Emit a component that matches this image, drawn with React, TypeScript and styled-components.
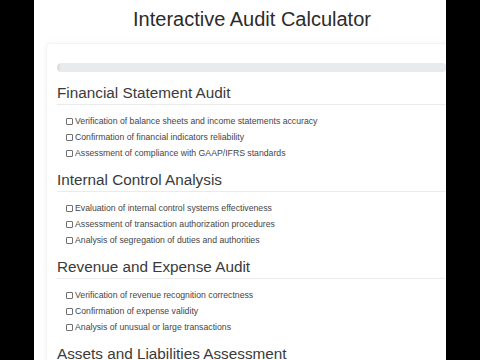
import React, { useState } from 'react'
import styled, { createGlobalStyle } from 'styled-components'

const GlobalStyle = createGlobalStyle`
    html, body {
        margin: 0;
        padding: 0;
        background: #000;
    }
    body {
        width: 480px;
        height: 360px;
        overflow: hidden;
        font-family: 'Liberation Sans', Arial, sans-serif;
    }
`

const Frame = styled.div`
    width: 412px;
    height: 360px;
    margin-left: 34px;
    background: #fff;
    overflow: hidden;
`

const Page = styled.div`
    width: 436px;
`

const Title = styled.h1`
    margin: 7px 0 12px;
    font-size: 20px;
    line-height: 24px;
    font-weight: 400;
    color: #2b2b2b;
    text-align: center;
`

const Card = styled.div`
    margin: 0 12px;
    padding: 20px 10px 12px;
    background: #fff;
    border: 1px solid #f3f3f3;
    border-radius: 4px;
    box-shadow: 0 0 6px rgba(0, 0, 0, 0.05);
`

const Progress = styled.div`
    height: 9px;
    margin: -1px 0 12px;
    border-radius: 5px;
    background: #e8eaec;
    overflow: hidden;
`

const ProgressFill = styled.div`
    height: 100%;
    min-width: 3px;
    border-radius: 5px;
    background: #dcdfe2;
`

const Section = styled.section`
    margin-bottom: 10px;
`

const SectionTitle = styled.h2`
    margin: 0;
    padding-bottom: 2px;
    font-size: 15.3px;
    line-height: 18px;
    font-weight: 400;
    color: #3a3a3a;
    border-bottom: 1px solid #ebebeb;
`

const List = styled.ul`
    list-style: none;
    margin: 8px 0 0;
    padding: 0 0 0 9px;
`

const Item = styled.li`
    display: flex;
    align-items: center;
    gap: 2px;
    height: 16px;
    font-size: 8.7px;
    color: #454545;
    white-space: nowrap;
`

const Box = styled.span<{ $checked: boolean }>`
    flex: none;
    width: 5px;
    height: 5px;
    border: 1px solid #6f6f6f;
    border-radius: 1px;
    background: ${(p) => (p.$checked ? '#0d6efd' : '#fff')};
    cursor: pointer;
`

const sections = [
    {
        title: 'Financial Statement Audit',
        items: [
            'Verification of balance sheets and income statements accuracy',
            'Confirmation of financial indicators reliability',
            'Assessment of compliance with GAAP/IFRS standards',
        ],
    },
    {
        title: 'Internal Control Analysis',
        items: [
            'Evaluation of internal control systems effectiveness',
            'Assessment of transaction authorization procedures',
            'Analysis of segregation of duties and authorities',
        ],
    },
    {
        title: 'Revenue and Expense Audit',
        items: [
            'Verification of revenue recognition correctness',
            'Confirmation of expense validity',
            'Analysis of unusual or large transactions',
        ],
    },
    {
        title: 'Assets and Liabilities Assessment',
        items: [] as string[],
    },
]

const App = () => {
    const [checked, setChecked] = useState<Record<string, boolean>>({})
    const total = sections.reduce((n, s) => n + s.items.length, 0)
    const done = Object.values(checked).filter(Boolean).length

    const toggle = (key: string) => () => setChecked((c) => ({ ...c, [key]: !c[key] }))

    return (
        <Frame>
            <GlobalStyle />
            <Page>
                <Title>Interactive Audit Calculator</Title>
                <Card>
                    <Progress>
                        <ProgressFill style={{ width: `${(done / total) * 100}%` }} />
                    </Progress>
                    {sections.map((s) => (
                        <Section key={s.title}>
                            <SectionTitle>{s.title}</SectionTitle>
                            {s.items.length > 0 && (
                                <List>
                                    {s.items.map((it) => (
                                        <Item key={it} onClick={toggle(it)}>
                                            <Box $checked={!!checked[it]} />
                                            {it}
                                        </Item>
                                    ))}
                                </List>
                            )}
                        </Section>
                    ))}
                </Card>
            </Page>
        </Frame>
    )
}

export default App
